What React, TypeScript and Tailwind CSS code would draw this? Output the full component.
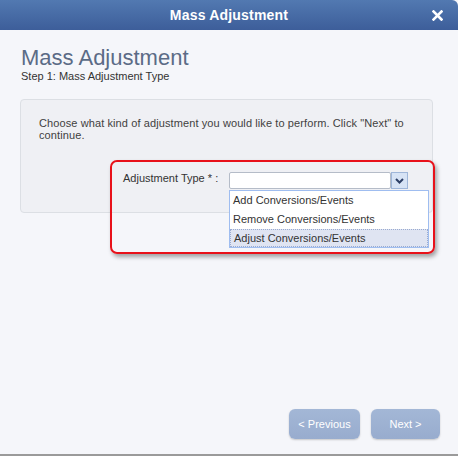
import React from "react";

export default function App() {
  return (
    <div
      className="w-[458px] h-[456px] bg-[#f5f6fa] flex flex-col relative overflow-hidden"
      style={{ fontFamily: '"Liberation Sans", Arial, sans-serif' }}
    >
      <div className="h-[30px] shrink-0 bg-gradient-to-b from-[#5279b1] to-[#3d5e9a] rounded-tr-[6px] flex items-center justify-center relative">
        <span className="text-white font-bold text-[14px] tracking-[0.2px]">Mass Adjustment</span>
        <svg className="absolute right-[15px] top-[10px]" width="11" height="11" viewBox="0 0 11 11">
          <path d="M1.5 1.5 L9.5 9.5 M9.5 1.5 L1.5 9.5" stroke="#ffffff" strokeWidth="2.6" strokeLinecap="square" />
        </svg>
      </div>
      <div className="flex-1 flex flex-col px-[20px] pt-[16px]">
        <div className="text-[#5b6b86] text-[22px] leading-[24px] ml-[1px]">Mass Adjustment</div>
        <div className="text-[#333] text-[11px] leading-[13px] ml-[1px]">Step 1: Mass Adjustment Type</div>
        <div className="mt-[16px] w-[413px] h-[114px] border border-[#dcdfe4] rounded-[4px] bg-[#eff0f4] relative">
          <div className="pl-[18px] pr-[18px] pt-[17px] text-[11px] leading-[12px] text-[#3f3f3f] tracking-[0.1px]">
            Choose what kind of adjustment you would like to perform. Click "Next" to continue.
          </div>
        </div>
      </div>
      <div className="absolute left-[110px] top-[160px] w-[325px] h-[94px] border-[2px] border-[#e8111a] rounded-[7px] shadow-[2px_3px_4px_rgba(0,0,0,0.35)]" />
      <div className="absolute left-[123px] top-[171px] text-[11px] text-[#333] leading-[14px]">Adjustment Type * :</div>
      <div className="absolute left-[229px] top-[172px] flex">
        <div className="w-[162px] h-[17px] bg-white border border-[#b5bcc8] rounded-[2px]" />
        <div className="w-[17px] h-[17px] bg-[#d7e3f5] border border-[#9fb6d9] flex items-center justify-center">
          <svg width="9" height="6" viewBox="0 0 9 6">
            <path d="M1 1 L4.5 4.5 L8 1" stroke="#2d3f66" strokeWidth="2" fill="none" />
          </svg>
        </div>
      </div>
      <div className="absolute left-[229px] top-[190px] w-[200px] h-[58px] bg-white border border-[#9fbdf0] flex flex-col text-[11px] text-[#333]">
        <div className="h-[19px] flex items-center pl-[3px]">Add Conversions/Events</div>
        <div className="h-[19px] flex items-center pl-[3px]">Remove Conversions/Events</div>
        <div className="h-[18px] flex items-center pl-[3px] bg-[#dfe4f2] border border-dotted border-[#9aabd0]">Adjust Conversions/Events</div>
      </div>
      <div className="absolute left-[289px] top-[409px] flex gap-[11px]">
        <div className="w-[71px] h-[30px] rounded-[6px] bg-gradient-to-b from-[#a3b7d6] to-[#98acce] shadow-[0_1px_2px_rgba(0,0,0,0.2)] flex items-center justify-center text-white text-[11px]">&lt; Previous</div>
        <div className="w-[69px] h-[30px] rounded-[6px] bg-gradient-to-b from-[#a3b7d6] to-[#98acce] shadow-[0_1px_2px_rgba(0,0,0,0.2)] flex items-center justify-center text-white text-[11px]">Next &gt;</div>
      </div>
      <div className="absolute left-0 bottom-0 w-full h-[2px] bg-[#9a9a9a]" />
    </div>
  );
}
